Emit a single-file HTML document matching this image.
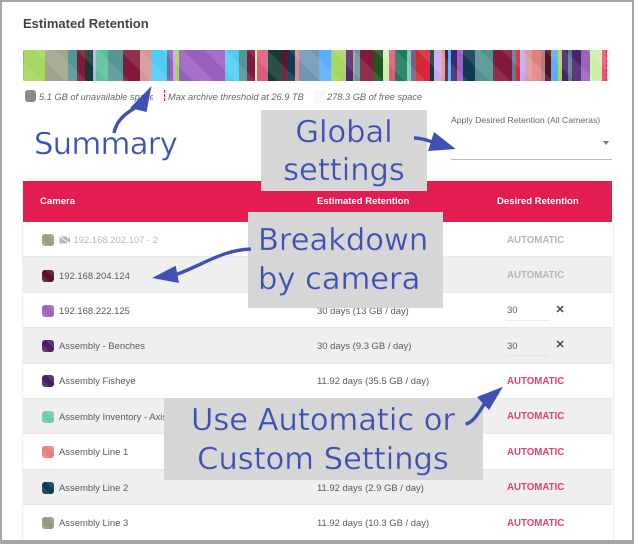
<!DOCTYPE html>
<html><head><meta charset="utf-8"><style>
html,body{margin:0;padding:0;background:#fff}
#p{position:relative;width:634px;height:544px;overflow:hidden;background:#fff;font-family:"Liberation Sans",sans-serif;color:#555;filter:blur(.3px)}
#p div,#p span.a{position:absolute;white-space:nowrap}
.fr{left:0;top:0;width:630px;height:538px;border:solid #a6a6a6;border-width:2px 2px 4px 2px;z-index:20}
.bar{left:23px;top:50px;width:588px;height:31px;background:#f8f8f8;border-radius:2px;overflow:hidden}
.bar i{position:absolute;top:0;height:31px;display:block}
.ov{left:0;top:0;width:588px;height:31px;background:repeating-linear-gradient(45deg,rgba(255,255,255,.1) 0 15px,rgba(255,255,255,0) 15px 30px)}
.lg{font-style:italic;font-size:9.25px;color:#666;line-height:12px;top:90.5px}
.r{left:23px;width:589px;height:35.5px;box-sizing:border-box;border-bottom:1px solid #e8e8e8}
.g{background:#efefef}
.t{font-size:9.45px;line-height:12px;color:#5a5a5a;margin-top:1px}
.s{left:42px;width:12px;height:12px;border-radius:3px;background-image:linear-gradient(45deg,rgba(255,255,255,.1) 33%,rgba(255,255,255,0) 33% 66%,rgba(255,255,255,.1) 66%)}
.au{left:507px;font-size:9.7px;font-weight:bold;line-height:12px;color:#ea3f68;margin-top:1px}
.off{color:#b5b5b5}
.h{font-size:9.55px;font-weight:bold;color:#fff;line-height:12px;top:195.5px;z-index:2}
.box{background:#d6d6d6;z-index:5}
.an{font-family:"DejaVu Sans",sans-serif;font-size:30.5px;line-height:38px;color:#3f51b5;z-index:6;-webkit-text-stroke:.35px #d6d6d6}
.w{-webkit-text-stroke:.35px #fff}
svg{position:absolute;left:0;top:0;z-index:7}
</style></head><body><div id="p">

<div style="left:23px;top:15.5px;font-size:13px;font-weight:bold;color:#444;line-height:16px">Estimated Retention</div>

<div class="bar">
<i style="left:0;width:1px;background:#e08a9a"></i><i style="left:1px;width:21px;background:#a5d65f"></i><i style="left:22px;width:23px;background:#9fa48c"></i><i style="left:45px;width:9px;background:#559593"></i><i style="left:54px;width:7.5px;background:#82183a"></i><i style="left:61.5px;width:8px;background:#123c33"></i><i style="left:69.5px;width:3.5px;background:#c8a8e8"></i><i style="left:73px;width:12px;background:#58bf9f"></i><i style="left:85px;width:15px;background:#559593"></i><i style="left:100px;width:17px;background:#82183a"></i><i style="left:117px;width:11px;background:#d29699"></i><i style="left:128px;width:16px;background:#4fcdf0"></i><i style="left:144px;width:3px;background:#5d7898"></i><i style="left:147px;width:3px;background:#9c62c0"></i><i style="left:150px;width:3px;background:#c8a8e8"></i><i style="left:153px;width:3px;background:#a5d65f"></i><i style="left:156px;width:46px;background:#9a5fbe"></i><i style="left:202px;width:14px;background:#4fcdf0"></i><i style="left:216px;width:8px;background:#559593"></i><i style="left:224px;width:8px;background:#82183a"></i><i style="left:232px;width:2px;background:#d6eeb0"></i><i style="left:234px;width:11px;background:#de5a7c"></i><i style="left:245px;width:14px;background:#123c33"></i><i style="left:259px;width:5px;background:#5a1530"></i><i style="left:264px;width:8px;background:#0f3a52"></i><i style="left:272px;width:4px;background:#e08a8a"></i><i style="left:276px;width:20px;background:#6f97b5"></i><i style="left:296px;width:12px;background:#5aaeff"></i><i style="left:308px;width:15px;background:#a5d65f"></i><i style="left:323px;width:7px;background:#552a6c"></i><i style="left:330px;width:2px;background:#999"></i><i style="left:332px;width:5px;background:#559f9d"></i><i style="left:337px;width:13px;background:#82183a"></i><i style="left:350px;width:10px;background:#1f5620"></i><i style="left:360px;width:6px;background:#d0eeb0"></i><i style="left:366px;width:6px;background:#e2587a"></i><i style="left:372px;width:12px;background:#1a7d5d"></i><i style="left:384px;width:4px;background:#80c8b0"></i><i style="left:388px;width:5px;background:#74608f"></i><i style="left:393px;width:8px;background:#cd2d2d"></i><i style="left:401px;width:6px;background:#e01f4a"></i><i style="left:407px;width:4px;background:#123c33"></i><i style="left:411px;width:8px;background:#c8a8f0"></i><i style="left:419px;width:3px;background:#e09a8a"></i><i style="left:422px;width:3px;background:#4f1a3a"></i><i style="left:425px;width:3px;background:#5aaeff"></i><i style="left:428px;width:6px;background:#4a2468"></i><i style="left:434px;width:6px;background:#9c62c0"></i><i style="left:440px;width:12px;background:#0f3a52"></i><i style="left:452px;width:18px;background:#4f938f"></i><i style="left:470px;width:19px;background:#82183a"></i><i style="left:489px;width:4px;background:#5d7898"></i><i style="left:493px;width:4px;background:#cd2d2d"></i><i style="left:497px;width:5px;background:#c8a8f0"></i><i style="left:502px;width:7px;background:#d89a9a"></i><i style="left:509px;width:9px;background:#e57f7f"></i><i style="left:518px;width:4px;background:#a98088"></i><i style="left:522px;width:6px;background:#4f1525"></i><i style="left:528px;width:7px;background:#5aaeff"></i><i style="left:535px;width:4px;background:#a5d65f"></i><i style="left:539px;width:6px;background:#4a2468"></i><i style="left:545px;width:4px;background:#5d7898"></i><i style="left:549px;width:9px;background:#4a2468"></i><i style="left:558px;width:9px;background:#9c62c0"></i><i style="left:567px;width:12px;background:#cfeeaa"></i><i style="left:579px;width:5px;background:#e2587a"></i>
<div class="ov"></div>
<i style="left:583px;width:0;border-left:1px dashed #f01f3f"></i>
</div>

<div style="left:25px;top:90px;width:11px;height:12px;border-radius:3px;background:#8a8a8a"></div>
<div class="lg" style="left:39px;width:114px;overflow:hidden">5.1 GB of unavailable space</div>
<div style="left:164px;top:90px;height:11px;border-left:1px dashed #f01f3f"></div>
<div class="lg" style="left:168px">Max archive threshold at 26.9 TB</div>
<div style="left:314px;top:90px;width:10px;height:11px;border-radius:3px;background:#f9f9f9;border:1px solid #f2f2f2"></div>
<div class="lg" style="left:327px">278.3 GB of free space</div>

<div style="left:451px;top:114.5px;font-size:8.7px;line-height:11px;color:#666">Apply Desired Retention (All Cameras)</div>
<div style="left:451px;top:159px;width:161px;height:1px;background:#bbb"></div>
<div style="left:603px;top:141px;width:0;height:0;border-left:3.5px solid transparent;border-right:3.5px solid transparent;border-top:4px solid #777"></div>

<div style="left:22px;top:180px;width:590px;height:361px;border-left:1px solid #eee;border-right:1px solid #eee"></div>
<div style="left:23px;top:180.5px;width:589px;height:41px;background:#e31c52"></div>
<div class="h" style="left:40px">Camera</div>
<div class="h" style="left:317px">Estimated Retention</div>
<div class="h" style="left:497px">Desired Retention</div>

<div class="r" style="top:221.5px"></div>
<div class="r g" style="top:257px"></div>
<div class="r" style="top:292.5px"></div>
<div class="r g" style="top:328px"></div>
<div class="r" style="top:363px"></div>
<div class="r g" style="top:398.5px"></div>
<div class="r" style="top:434px"></div>
<div class="r g" style="top:469.5px"></div>

<div class="s" style="top:234px;background-color:#98a084"></div>
<svg width="634" height="544" style="z-index:1"><path d="M59.5 236.5h7.5v7h-7.5zM67 239l3-2v6l-3-2z" fill="#b5b5b5"/><path d="M59 236l11 8" stroke="#fff" stroke-width=".8"/></svg>
<div class="t off" style="left:73.5px;top:234px;color:#b8b8b8">192.168.202.107 - 2</div>
<div class="s" style="top:270px;background-color:#551428"></div>
<div class="t" style="left:59px;top:270px">192.168.204.124</div>
<div class="s" style="top:305px;background-color:#9c62c0"></div>
<div class="t" style="left:59px;top:305px">192.168.222.125</div>
<div class="s" style="top:340px;background-color:#4a2060"></div>
<div class="t" style="left:59px;top:340px">Assembly - Benches</div>
<div class="s" style="top:375px;background-color:#4a2060"></div>
<div class="t" style="left:59px;top:375px">Assembly Fisheye</div>
<div class="s" style="top:411px;background-color:#72c8b6"></div>
<div class="t" style="left:59px;top:411px">Assembly Inventory - Axis</div>
<div class="s" style="top:446px;background-color:#e87f7f"></div>
<div class="t" style="left:59px;top:446px">Assembly Line 1</div>
<div class="s" style="top:482px;background-color:#0f3a52"></div>
<div class="t" style="left:59px;top:482px">Assembly Line 2</div>
<div class="s" style="top:517px;background-color:#94997f"></div>
<div class="t" style="left:59px;top:517px">Assembly Line 3</div>

<div class="t" style="left:317px;top:305px">30 days (13 GB / day)</div>
<div class="t" style="left:317px;top:340px">30 days (9.3 GB / day)</div>
<div class="t" style="left:317px;top:375px">11.92 days (35.5 GB / day)</div>
<div class="t" style="left:317px;top:482px">11.92 days (2.9 GB / day)</div>
<div class="t" style="left:317px;top:517px">11.92 days (10.3 GB / day)</div>

<div class="au off" style="top:234px">AUTOMATIC</div>
<div class="au off" style="top:269px">AUTOMATIC</div>
<div class="t" style="left:507px;top:304px">30</div>
<div style="left:506px;top:320px;width:43px;height:1px;background:#eee"></div>
<div class="t" style="left:555.5px;top:303px;font-weight:bold;color:#444;font-size:11px">✕</div>
<div class="t" style="left:507px;top:339.5px">30</div>
<div style="left:506px;top:355px;width:43px;height:1px;background:#e4e4e4"></div>
<div class="t" style="left:555.5px;top:338px;font-weight:bold;color:#444;font-size:11px">✕</div>
<div class="au" style="top:374.5px">AUTOMATIC</div>
<div class="au" style="top:410px">AUTOMATIC</div>
<div class="au" style="top:445.5px">AUTOMATIC</div>
<div class="au" style="top:481px">AUTOMATIC</div>
<div class="au" style="top:516.5px">AUTOMATIC</div>

<div class="box" style="left:261px;top:110px;width:166px;height:81px"></div>
<div class="box" style="left:247.5px;top:212px;width:195.5px;height:96px"></div>
<div class="box" style="left:163.5px;top:398px;width:319px;height:81.5px"></div>

<div class="an w" style="left:34px;top:125.5px;letter-spacing:-.6px">Summary</div>
<div class="an" style="left:261px;top:114px;width:166px;text-align:center">Global</div>
<div class="an" style="left:261px;top:152px;width:166px;text-align:center">settings</div>
<div class="an" style="left:258px;top:222px">Breakdown</div>
<div class="an" style="left:258px;top:260.5px">by camera</div>
<div class="an" style="left:163.5px;top:402px;width:319px;text-align:center">Use Automatic or</div>
<div class="an" style="left:163.5px;top:440.5px;width:319px;text-align:center">Custom Settings</div>

<svg width="634" height="544">
<g fill="#3f51b5">
<path d="M151.5 86L130 108L146.5 112Z"/>
<path d="M428 151L434 132L455.7 149Z"/>
<path d="M152 278L175.7 265.7L179 283Z"/>
<path d="M503 386.7L477 397L489 410Z"/>
</g>
<g fill="none" stroke="#3f51b5" stroke-width="3.4">
<path d="M114 133C116 122 124 114 135 108"/>
<path d="M414 138C421 138 427 140 435 143"/>
<path d="M251 249C222 250 205 264 175 275"/>
<path d="M465.7 424C474 422 479 412 485 403"/>
</g>
</svg>

<div class="fr"></div>
</div></body></html>
